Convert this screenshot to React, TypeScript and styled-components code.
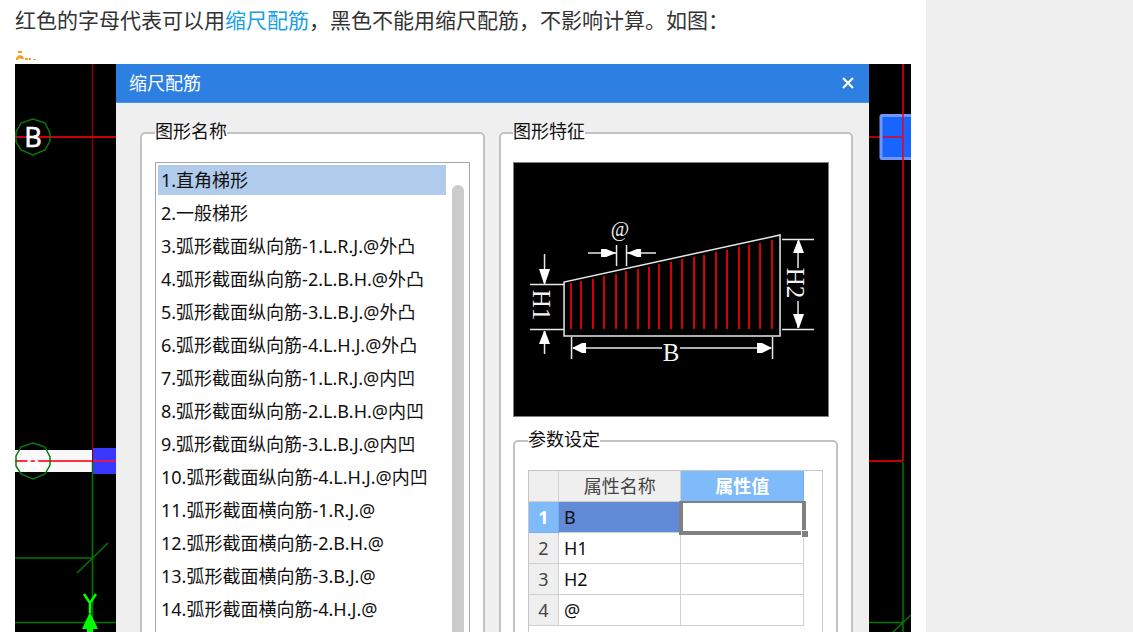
import React, { useState } from "react";
import styled, { createGlobalStyle, css } from "styled-components";

const Global = createGlobalStyle`
  *, *::before, *::after { box-sizing: border-box; }
  body {
    margin: 0;
    background: #f0f0f0;
    font-family: "Noto Sans", "Noto Sans CJK SC", sans-serif;
    color: #111;
  }
`;

const Page = styled.div`
  display: flex;
  height: 100vh;
  overflow: hidden;
`;

const Article = styled.main`
  flex: 1;
  min-width: 0;
  display: flex;
  flex-direction: column;
  padding: 0 15px;
  background: #fff;
`;

const Sidebar = styled.aside`
  flex: none;
  width: 207px;
  background: #f0f0f0;
`;

const Intro = styled.p`
  margin: 0;
  padding: 3px 0 1px;
  font-family: "Noto Sans CJK SC", sans-serif;
  font-size: 21px;
  line-height: 32px;
  color: #333;
  white-space: nowrap;
`;

const TopicLink = styled.a`
  color: #1ba0e1;
  text-decoration: none;
`;

const Mark = styled.svg`
  display: block;
  width: 24px;
  height: 28px;
`;

const Figure = styled.figure`
  flex: 1;
  min-height: 0;
  display: flex;
  margin: 0;
  overflow: hidden;
  background: #000;
`;

const Strip = styled.svg<{ $width: number }>`
  flex: none;
  display: block;
  width: ${(p) => p.$width}px;
  height: 568px;
`;

const Dialog = styled.section`
  flex: 1;
  min-width: 0;
  display: flex;
  flex-direction: column;
  background: #efefef;
`;

const TitleBar = styled.header`
  flex: none;
  display: flex;
  align-items: center;
  justify-content: space-between;
  height: 39px;
  padding: 0 12px 0 13px;
  background: #2d7fe2;
  border-bottom: 1px solid #4a93e8;
`;

const Title = styled.h1`
  margin: 0;
  font-size: 18px;
  line-height: 24px;
  font-weight: 400;
  color: #fff;
`;

const CloseButton = styled.button`
  display: grid;
  place-items: center;
  width: 18px;
  height: 24px;
  padding: 0;
  border: 0;
  background: none;
`;

const Panels = styled.div`
  flex: 1;
  display: flex;
  gap: 14px;
  padding: 16px 16px 0 24px;
`;

const Group = styled.fieldset<{ $grow?: number; $pad: string }>`
  ${(p) => p.$grow && css`flex: ${p.$grow} 1 0;`}
  min-width: 0;
  height: 560px;
  margin: 0;
  padding: ${(p) => p.$pad};
  border: 2px solid #c2c2c2;
  border-radius: 5px;
  background: #fff;
`;

const Legend = styled.legend`
  padding: 0 0 4px;
  font-size: 18px;
  line-height: 24px;
`;

const ListFrame = styled.div`
  display: flex;
  height: 500px;
  padding: 2px 5px 0 2px;
  border: 1px solid #a6a6a6;
`;

const ShapeList = styled.ul`
  flex: 1;
  display: flex;
  flex-direction: column;
  gap: 3px;
  margin: 0;
  padding: 0;
  list-style: none;
`;

const ShapeButton = styled.button<{ $active: boolean }>`
  display: block;
  width: 100%;
  height: 30px;
  padding: 0 3px;
  border: 0;
  background: ${(p) => (p.$active ? "#b0cbec" : "none")};
  font: inherit;
  font-size: 18px;
  line-height: 30px;
  text-align: left;
  white-space: nowrap;
  color: #111;
`;

const Thumb = styled.div`
  width: 12px;
  margin: 20px 0 0 6px;
  border-radius: 6px;
  background: #cbcbcb;
`;

const Preview = styled.svg`
  display: block;
  width: calc(100% - 9px);
  height: 255px;
  margin-bottom: 10px;
  border: 1px solid #808080;
  background: #000;
`;

const TableFrame = styled.div`
  height: 300px;
  border: 1px solid #c6c6c6;
  padding-right: 18px;
`;

const Table = styled.table`
  width: 100%;
  table-layout: fixed;
  border-collapse: separate;
  border-spacing: 0;
  font-size: 18px;
  line-height: 24px;
`;

const HeadCell = styled.th<{ $active?: boolean; $width?: number }>`
  ${(p) => p.$width && css`width: ${p.$width}px;`}
  height: 31px;
  padding: 0;
  border: 0 solid ${(p) => (p.$active ? "#72aef0" : "#d0d0d0")};
  border-width: 0 1px 1px 0;
  background: ${(p) => (p.$active ? "#7fbafa" : "#efefef")};
  color: ${(p) => (p.$active ? "#fff" : "#444")};
  font-weight: ${(p) => (p.$active ? 700 : 400)};
`;

const Cell = styled.td<{ $active?: boolean }>`
  position: relative;
  height: 31px;
  padding: 0 0 0 5px;
  border-right: 1px solid #d0d0d0;
  border-bottom: 1px solid #d0d0d0;
  background: ${(p) => (p.$active ? "#618bd6" : "#fff")};
`;

const ValueCell = styled(Cell)<{ $focused: boolean }>`
  padding: 0;
  ${(p) =>
    p.$focused &&
    css`
      &::before {
        content: "";
        position: absolute;
        inset: -1px -3px -3px -2px;
        border: 4px solid #808080;
        border-top-width: 2px;
        pointer-events: none;
        z-index: 1;
      }
      &::after {
        content: "";
        position: absolute;
        right: -6px;
        bottom: -6px;
        width: 8px;
        height: 8px;
        border: 1px solid #fff;
        background: #808080;
        z-index: 2;
      }
    `}
`;

const ValueInput = styled.input`
  display: block;
  width: 100%;
  height: 30px;
  padding: 0 5px;
  border: 0;
  outline: 0;
  background: transparent;
  font: inherit;
`;

const shapes = [
  "1.直角梯形",
  "2.一般梯形",
  "3.弧形截面纵向筋-1.L.R.J.@外凸",
  "4.弧形截面纵向筋-2.L.B.H.@外凸",
  "5.弧形截面纵向筋-3.L.B.J.@外凸",
  "6.弧形截面纵向筋-4.L.H.J.@外凸",
  "7.弧形截面纵向筋-1.L.R.J.@内凹",
  "8.弧形截面纵向筋-2.L.B.H.@内凹",
  "9.弧形截面纵向筋-3.L.B.J.@内凹",
  "10.弧形截面纵向筋-4.L.H.J.@内凹",
  "11.弧形截面横向筋-1.R.J.@",
  "12.弧形截面横向筋-2.B.H.@",
  "13.弧形截面横向筋-3.B.J.@",
  "14.弧形截面横向筋-4.H.J.@",
];

const params = ["B", "H1", "H2", "@"];

// x of every bar in the trapezoid, left to right
const bars = [58, 68, 80, 91, 103, 113, 125, 136, 146, 158, 169, 181, 191, 203, 214, 226, 236, 247, 259];

const AxisBubble = ({ y, label }: { y: number; label: string }) => (
  <g>
    <polygon
      points="18,-18 30,-14 35,-4 35,4 30,13 18,18 6,13 1,5 1,-5 6,-14"
      transform={`translate(0 ${y})`}
      fill="none"
      stroke="#0a780a"
      strokeWidth="1.5"
    />
    <text x="18" y={y + 10} textAnchor="middle" fill="#fff" stroke="#fff" strokeWidth="0.5" fontSize="27" fontFamily="Noto Sans">
      {label}
    </text>
  </g>
);

const LeftCanvas = () => (
  <Strip $width={101} viewBox="0 0 101 568" aria-hidden="true">
    <path d="M77.5 0V397" stroke="#8c0000" strokeWidth="1.5" />
    <path d="M0 73H101" stroke="#c80010" strokeWidth="2" />
    <AxisBubble y={73} label="B" />
    <rect x="0" y="386" width="77" height="22" fill="#f8f8f8" />
    <rect x="78" y="384" width="23" height="26" fill="#3838ff" />
    <path d="M0 397H77" stroke="#ff3040" strokeWidth="2" />
    <path d="M78 397H101" stroke="#e01850" strokeWidth="2" />
    <AxisBubble y={397} label="A" />
    <path d="M77.5 398V568M0 494H77M0 558.5H101M62 509L93 479" stroke="#007800" strokeWidth="1.5" fill="none" />
    <path d="M69 530L75 539L81 530M75 539V549" stroke="#00ff00" strokeWidth="2.5" fill="none" />
    <path d="M75 548L83 565H78V568H72V565H67Z" fill="#00ff00" />
  </Strip>
);

const RightCanvas = () => (
  <Strip $width={42} viewBox="0 0 42 568" aria-hidden="true">
    <path d="M0 73H12" stroke="#b00000" strokeWidth="2" />
    <rect x="12" y="51.5" width="36" height="43" rx="1" fill="#1764ff" stroke="#6f98ff" strokeWidth="3" />
    <path d="M14 73H33" stroke="#b01850" strokeWidth="2" />
    <path d="M34 0V397" stroke="#f00010" strokeWidth="1.5" />
    <path d="M0 397H34" stroke="#c00000" strokeWidth="2" />
    <path d="M34 398V568M0 558.5H34M24 568L42 551" stroke="#007800" strokeWidth="1.5" fill="none" />
  </Strip>
);

const Trapezoid = () => (
  <Preview viewBox="0 0 314 253" preserveAspectRatio="xMidYMid meet" role="img" aria-label="直角梯形">
    <g stroke="#d80000" strokeWidth="2">
      {bars.map((x) => (
        <path key={x} d={`M${x - 1} ${Math.round(119 - (x - 50) * 0.215 + 3)}V166`} />
      ))}
    </g>
    <g stroke="#e8e8e8" strokeWidth="1.5" fill="none">
      <path d="M50 173V119L266 72V173Z" />
      <path d="M16 121.5H50M16 166.5H50M30.5 91V120M30.5 168V191" />
      <path d="M268 76.5H300M268 166.5H300M284 78V105M284 138V165" />
      <path d="M57.5 174V196M258.5 174V196M59 185H148M166 185H257" />
      <path d="M102.5 82V103M112.5 82V103M74 90H102M113 90H142" />
    </g>
    <g fill="#fff">
      <path d="M25 106H36L31 121H30Z" />
      <path d="M25 181H36L31 168H30Z" />
      <path d="M279 90H290L285 77H284Z" />
      <path d="M279 151H290L285 165H284Z" />
      <path d="M72 180V190H68L58 185L68 180Z" />
      <path d="M243 180V190H248L258 185L248 180Z" />
      <path d="M87 86V94H92L102 90L92 86Z" />
      <path d="M127 86V94H123L113 90L123 86Z" />
    </g>
    <g fill="#f4f4f4" fontFamily="Liberation Serif" textAnchor="middle">
      <text x="157" y="198" fontSize="25">B</text>
      <text x="106" y="73" fontSize="20">@</text>
      <text transform="translate(19 142) rotate(90)" fontSize="25">H1</text>
      <text transform="translate(273 120) rotate(90)" fontSize="25">H2</text>
    </g>
  </Preview>
);

export default function App() {
  const [active, setActive] = useState(0);
  return (
    <Page>
      <Global />
      <Article>
        <Intro>
          红色的字母代表可以用<TopicLink href="#topic">缩尺配筋</TopicLink>，黑色不能用缩尺配筋，不影响计算。如图：
        </Intro>
        <Mark viewBox="0 0 24 28" aria-hidden="true">
          <path d="M3 15h4v2h-4zM1 22l3-3 4 1 1 3H6l-2-1-1 2H1zM10 22h3v2h-3zM14 22h2v2h-2zM18 23h3v1h-3z" fill="#f5a01c" />
        </Mark>
        <Figure>
          <LeftCanvas />
          <Dialog aria-labelledby="dialog-title">
            <TitleBar>
              <Title id="dialog-title">缩尺配筋</Title>
              <CloseButton type="button" aria-label="关闭">
                <svg width="14" height="14" viewBox="0 0 14 14">
                  <path d="M2 2L12 12M12 2L2 12" stroke="#fff" strokeWidth="2.2" />
                </svg>
              </CloseButton>
            </TitleBar>
            <Panels>
              <Group $grow={342} $pad="15px 13px 0">
                <Legend>图形名称</Legend>
                <ListFrame>
                  <ShapeList>
                    {shapes.map((name, i) => (
                      <li key={name}>
                        <ShapeButton type="button" $active={i === active} onClick={() => setActive(i)}>
                          {name}
                        </ShapeButton>
                      </li>
                    ))}
                  </ShapeList>
                  <Thumb />
                </ListFrame>
              </Group>
              <Group $grow={353} $pad="15px 13px 0 12px">
                <Legend>图形特征</Legend>
                <Trapezoid />
                <Group $pad="15px 13px 0">
                  <Legend>参数设定</Legend>
                  <TableFrame>
                    <Table>
                      <thead>
                        <tr>
                          <HeadCell $width={30} aria-label="序号" />
                          <HeadCell scope="col">属性名称</HeadCell>
                          <HeadCell scope="col" $active>属性值</HeadCell>
                        </tr>
                      </thead>
                      <tbody>
                        {params.map((name, i) => (
                          <tr key={name}>
                            <HeadCell scope="row" $active={i === 0}>{i + 1}</HeadCell>
                            <Cell $active={i === 0}>{name}</Cell>
                            <ValueCell $focused={i === 0}>
                              <ValueInput type="text" aria-label={name} />
                            </ValueCell>
                          </tr>
                        ))}
                      </tbody>
                    </Table>
                  </TableFrame>
                </Group>
              </Group>
            </Panels>
          </Dialog>
          <RightCanvas />
        </Figure>
      </Article>
      <Sidebar />
    </Page>
  );
}
